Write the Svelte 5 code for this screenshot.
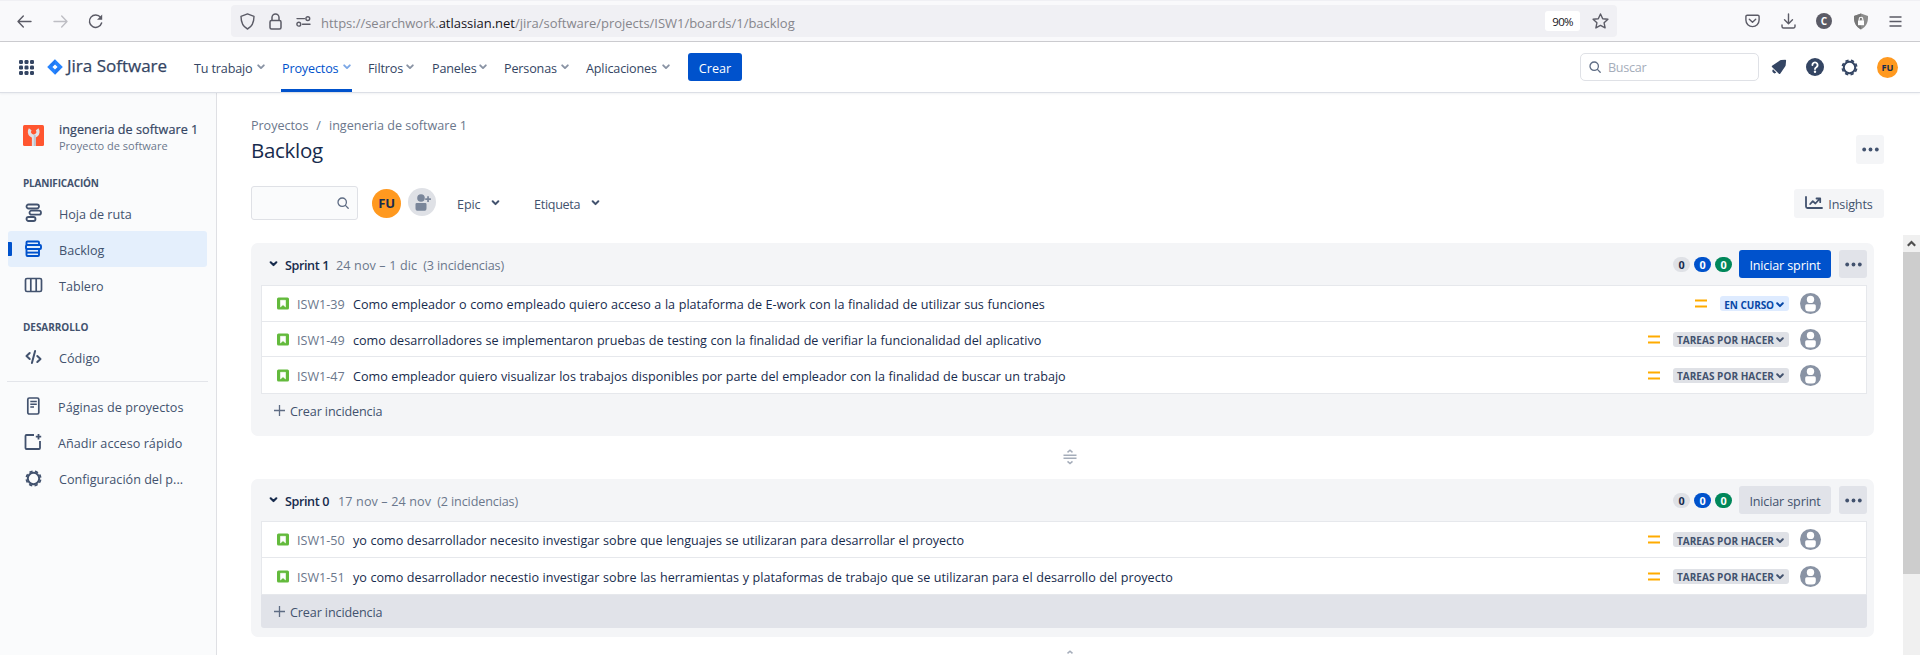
<script>
  const menus = [
    { label: 'Tu trabajo', w: 63, gap: 17 },
    { label: 'Proyectos', w: 61, gap: 16, active: true },
    { label: 'Filtros', w: 38, gap: 18 },
    { label: 'Paneles', w: 47, gap: 17 },
    { label: 'Personas', w: 57, gap: 17 },
    { label: 'Aplicaciones', w: 76, gap: 18 }
  ];
  const todo = 'Tareas por hacer';
  const sprints = [
    {
      name: 'Sprint 1', nameWidth: 51, dates: '24 nov – 1 dic', count: '(3 incidencias)', primary: true,
      issues: [
        { key: 'ISW1-39', text: 'Como empleador o como empleado quiero acceso a la plataforma de E-work con la finalidad de utilizar sus funciones', status: 'En curso', h: 35 },
        { key: 'ISW1-49', text: 'como desarrolladores se implementaron pruebas de testing con la finalidad de verifiar la funcionalidad del aplicativo', status: todo, h: 34 },
        { key: 'ISW1-47', text: 'Como empleador quiero visualizar los trabajos disponibles por parte del empleador con la finalidad de buscar un trabajo', status: todo, h: 36 }
      ]
    },
    {
      name: 'Sprint 0', nameWidth: 53, dates: '17 nov – 24 nov', count: '(2 incidencias)', primary: false,
      issues: [
        { key: 'ISW1-50', text: 'yo como desarrollador necesito investigar sobre que lenguajes se utilizaran para desarrollar el proyecto', status: todo, h: 35 },
        { key: 'ISW1-51', text: 'yo como desarrollador necestio investigar sobre las herramientas y plataformas de trabajo que se utilizaran para el desarrollo del proyecto', status: todo, h: 36 }
      ]
    }
  ];
</script>

{#snippet chevron(w, sw)}
  <svg class="chev" width={w} height="6" viewBox="0 0 8 6" fill="none" stroke="currentColor" stroke-width={sw} stroke-linecap="round" stroke-linejoin="round"><path d="M1.2 1.3 4 4.1 6.8 1.3" /></svg>
{/snippet}

{#snippet gear(s)}
  <svg width={s} height={s} viewBox="0 0 17 17" fill="none" stroke="currentColor"><circle cx="8.5" cy="8.5" r="5.7" stroke-width="2" /><circle cx="8.5" cy="8.5" r="7.2" stroke-width="1.7" stroke-dasharray="3.3 2.355" stroke-dashoffset="-1.2" /></svg>
{/snippet}

{#snippet magnifier(s)}
  <svg width={s} height={s} viewBox="0 0 12 12" fill="none" stroke="currentColor" stroke-width="1.3" stroke-linecap="round"><circle cx="5.2" cy="5.2" r="4.2" /><path d="m8.4 8.4 2.8 2.8" /></svg>
{/snippet}

{#snippet dots()}
  <svg width="17" height="5" viewBox="0 0 17 5" fill="currentColor"><circle cx="2.2" cy="2.5" r="1.9" /><circle cx="8.5" cy="2.5" r="1.9" /><circle cx="14.8" cy="2.5" r="1.9" /></svg>
{/snippet}

{#snippet resizer()}
  <svg class="resizer" width="14" height="16" viewBox="0 0 14 16" fill="none" stroke="#a5adba"><path d="M.5 6.3h13M.5 9.3h13" stroke-width="1.4" /><path d="M4.5 3.4 7 1.2l2.5 2.2M4.5 12.4 7 14.6l2.5-2.2" stroke-width="1.5" /></svg>
{/snippet}

<div class="page">
  <div class="browser">
    <svg class="back" width="15" height="13" viewBox="0 0 15 13" fill="none" stroke="#5b5b66" stroke-width="1.4" stroke-linecap="round" stroke-linejoin="round"><path d="M14 6.5H1M6.3 1 1 6.5 6.3 12" /></svg>
    <svg class="fwd" width="15" height="13" viewBox="0 0 15 13" fill="none" stroke="#bebec4" stroke-width="1.4" stroke-linecap="round" stroke-linejoin="round"><path d="M1 6.5h13M8.7 1 14 6.5 8.7 12" /></svg>
    <svg class="reload" width="16" height="15" viewBox="0 0 16 15" fill="none" stroke="#5b5b66" stroke-width="1.5"><path d="M12.6 3.4A6.2 6.2 0 1 0 13.6 9" stroke-linecap="round" /><path d="M14.2.6v5.2H9z" fill="#5b5b66" stroke="none" /></svg>
    <div class="urlbar">
      <svg width="15" height="17" viewBox="0 0 15 17" fill="none" stroke="#5b5b66" stroke-width="1.4" stroke-linejoin="round"><path d="M7.5.9 14 3.3c0 5.7-1.5 10.2-6.5 12.7C2.5 13.5 1 9 1 3.3Z" /></svg>
      <svg class="lock" width="13" height="17" viewBox="0 0 13 17" fill="none" stroke="#5b5b66" stroke-width="1.5"><rect x="1" y="7.5" width="11" height="8.5" rx="1.5" /><path d="M3 7.5V4.5a3.5 3.5 0 0 1 7 0v3" /></svg>
      <svg class="perm" width="15" height="11" viewBox="0 0 15 11" fill="none" stroke="#5b5b66" stroke-width="1.4" stroke-linecap="round"><path d="M1 2.6h7.5M6.5 8.2H14" /><circle cx="11.8" cy="2.6" r="1.9" /><circle cx="2.8" cy="8.2" r="1.9" /></svg>
      <span class="url">https://searchwork.<b>atlassian.net</b>/jira/software/projects/ISW1/boards/1/backlog</span>
      <span class="zoom">90%</span>
      <svg class="star" width="17" height="16" viewBox="0 0 17 16" fill="none" stroke="#5b5b66" stroke-width="1.4" stroke-linejoin="round"><path d="m8.5 1 2.2 4.7 5.2.6-3.8 3.5 1 5.1-4.6-2.5-4.6 2.5 1-5.1L1.1 6.3l5.2-.6Z" /></svg>
    </div>
    <div class="ext">
      <svg width="15" height="14" viewBox="0 0 15 14" fill="none" stroke="#5b5b66" stroke-width="1.4" stroke-linecap="round" stroke-linejoin="round"><path d="M2.2 1.2h10.6a1.3 1.3 0 0 1 1.3 1.3V6a6.6 6.6 0 0 1-13.2 0V2.5a1.3 1.3 0 0 1 1.3-1.3Z" /><path d="m4.300 5.300 3.200 3 3.200-3" /></svg>
      <svg width="15" height="16" viewBox="0 0 15 16" fill="none" stroke="#5b5b66" stroke-width="1.4" stroke-linecap="round" stroke-linejoin="round"><path d="M7.5 1v9.5M3.500 6.700l4 4 4-4M1 12v1.500A1.500 1.500 0 0 0 2.500 15h10a1.500 1.500 0 0 0 1.500-1.500V12" /></svg>
      <span class="cbadge">C</span>
      <svg width="16" height="17" viewBox="0 0 16 17"><path d="M8 .5 15 3c.2 6-1.500 10.700-7 13.500C2.500 13.700.8 9 1 3Z" fill="#8c8c8c" /><path d="M8 .5 1 3C.8 9 2.500 13.700 8 16.500Z" fill="#777" /><rect x="5" y="7.400" width="6" height="4.800" fill="#fff" /><path d="M6.200 7.500V6a1.800 1.800 0 0 1 3.600 0v1.500" fill="none" stroke="#fff" stroke-width="1.100" /></svg>
      <svg width="13" height="11" viewBox="0 0 13 11" stroke="#5b5b66" stroke-width="1.300"><path d="M.5 1h12M.5 5.500h12M.5 10h12" /></svg>
    </div>
  </div>

  <header class="nav">
    <svg class="grid" width="15" height="15" viewBox="0 0 15 15" fill="#344563">{#each [0, 5.5, 11] as y}{#each [0, 5.5, 11] as x}<rect {x} {y} width="4" height="4" rx="1.2" />{/each}{/each}</svg>
    <svg class="mark" width="16" height="16" viewBox="0 0 16 16"><path d="M8 .2 15.800 8 8 15.800.2 8Z" fill="#2684ff" /><path d="M8 .2v5.300L5.500 8 2.800 5.400ZM8 15.800v-5.300L10.500 8l2.700 2.600Z" fill="#1868e0" opacity=".4" /><path d="M8 5.400 10.600 8 8 10.600 5.400 8Z" fill="#fff" /></svg>
    <span class="brand">Jira Software</span>
    {#each menus as m}
      <div class="menu" class:active={m.active} style:margin-right="{m.gap}px">
        <span style:width="{m.w}px">{m.label}</span>
        {@render chevron(8, 1.9)}
      </div>
    {/each}
    <button class="create">Crear</button>
    <div class="search">{@render magnifier(12)}<span>Buscar</span></div>
    <svg class="bell" width="16" height="16" viewBox="0 0 16 16" fill="#344563"><path d="M10.200 1.100 14.300.8q.8 0 .8.8L14.700 6q0 1.200-.9 2l-4.600 6.700q-.6.700-1.300 0L1 7.900Q.4 7.300 1.100 6.800L8.200 2q.9-.8 2-.9Z" /><path d="M2 10.300a2.300 2.300 0 0 0 3.300 3.300Z" /></svg>
    <svg class="help" width="18" height="18" viewBox="0 0 18 18"><circle cx="9" cy="9" r="9" fill="#344563" /><path d="M6.400 7a2.600 2.600 0 1 1 4 2.200C9.500 9.800 9 10.200 9 11" fill="none" stroke="#fff" stroke-width="1.900" stroke-linecap="round" /><circle cx="9" cy="13.700" r="1.200" fill="#fff" /></svg>
    <span class="cog">{@render gear(17)}</span>
    <span class="me">FU</span>
  </header>

  <div class="body">
    <aside>
      <div class="project">
        <svg width="21" height="21" viewBox="0 0 21 21"><rect width="21" height="21" rx="1.500" fill="#ff5630" /><path d="M7.200 4.300a4.300 4.300 0 1 0 7 0" fill="none" stroke="#dfe1e6" stroke-width="3.200" /><rect x="8.900" y="10" width="3.800" height="11" fill="#dfe1e6" /><path d="M10.800 10h1.900v11h-1.900Z" fill="#bcc6d0" /></svg>
        <div><div class="pname">ingeneria de software 1</div><div class="psub">Proyecto de software</div></div>
      </div>
      <h2>PLANIFICACIÓN</h2>
      <div class="item">
        <svg width="18" height="20" viewBox="0 0 18 20" fill="none" stroke="#42526e" stroke-width="1.800"><rect x="2" y="1.500" width="12.500" height="4" rx="2" /><rect x="5" y="7.700" width="11.500" height="4" rx="2" /><rect x="2" y="14" width="9" height="4" rx="2" /></svg>
        <span>Hoja de ruta</span>
      </div>
      <div class="item selected">
        <svg width="18" height="18" viewBox="0 0 18 18" fill="none" stroke="#0052cc" stroke-width="1.900"><rect x="2" y="1.500" width="12.500" height="3.500" rx="1" /><rect x="1.500" y="5" width="15" height="4" rx="1" /><rect x="2" y="9" width="12.500" height="7" rx="1" /><path d="M2 12.600h12.500" /></svg>
        <span>Backlog</span>
      </div>
      <div class="item">
        <svg width="18" height="16" viewBox="0 0 18 16" fill="none" stroke="#42526e" stroke-width="1.700"><rect x="1" y="1.500" width="16" height="13" rx="1.500" /><path d="M6.300 1.500v13M11.700 1.500v13" /></svg>
        <span>Tablero</span>
      </div>
      <h2 class="dev">DESARROLLO</h2>
      <div class="item">
        <svg width="18" height="16" viewBox="0 0 18 16" fill="none" stroke="#42526e" stroke-width="2" stroke-linecap="round" stroke-linejoin="round"><path d="M5.200 4 2 7l3.200 3M12.800 7 16 10l-3.200 3M10.600 2 7.400 14" /></svg>
        <span>Código</span>
      </div>
      <hr />
      <div class="item more">
        <svg width="16" height="18" viewBox="0 0 16 18" fill="none" stroke="#42526e" stroke-width="1.700"><rect x="2.300" y="1" width="11" height="16" rx="1.500" /><path d="M4.800 4.500h6.500M4.800 7.200h6.500M4.800 9.900h3.700" stroke-width="1.500" /></svg>
        <span>Páginas de proyectos</span>
      </div>
      <div class="item more">
        <svg width="18" height="18" viewBox="0 0 18 18" fill="none" stroke="#42526e" stroke-width="1.800"><path d="M9.500 2H2a1 1 0 0 0-1 1v12a1 1 0 0 0 1 1h12.500a1 1 0 0 0 1-1V8" /><path d="M14 1v5.400M11.300 3.700h5.400" /></svg>
        <span>Añadir acceso rápido</span>
      </div>
      <div class="item conf"><i>{@render gear(17)}</i><span>Configuración del p...</span></div>
    </aside>

    <main>
      <div class="top">
        <div class="crumbs"><span>Proyectos</span><span>/</span><span>ingeneria de software 1</span></div>
        <div class="titlerow"><h1>Backlog</h1><button class="square light">{@render dots()}</button></div>
        <div class="filters">
          <div class="find">{@render magnifier(12)}</div>
          <span class="avatar">FU</span>
          <svg class="add" width="28" height="28" viewBox="0 0 28 28"><circle cx="14" cy="14" r="14" fill="#dfe1e6" /><g fill="#7a869a"><circle cx="13" cy="10" r="3.800" /><path d="M7.500 16.200q0-1.200 1.200-1.200h8.600q1.200 0 1.200 1.200v4q0 2.600-2.600 2.600h-5.800q-2.600 0-2.600-2.600Z" /><path d="M19.200 8.200h1.700v2h2v1.700h-2v2h-1.700v-2h-2v-1.700h2Z" /></g></svg>
          <div class="drop epic"><span>Epic</span>{@render chevron(9, 2)}</div>
          <div class="drop tag"><span>Etiqueta</span>{@render chevron(9, 2)}</div>
          <button class="insights">
            <svg width="18" height="14" viewBox="0 0 18 14" fill="none" stroke="#42526e" stroke-width="1.800" stroke-linecap="round" stroke-linejoin="round"><path d="M1 1v9.500A1.500 1.500 0 0 0 2.500 12H17" /><path d="m5.200 8 2.600-2.800 2.600 2.300L14.500 3M11.500 2.500h3.700v3.700" /></svg>
            <span>Insights</span>
          </button>
        </div>
      </div>

      <div class="scroll">
        <div class="list">
          {#each sprints as s}
            <section>
              <div class="shead">
                {@render chevron(9, 2.1)}
                <b style:width="{s.nameWidth}px">{s.name}</b><span class="dates">{s.dates}</span><span>{s.count}</span>
                <div class="counts"><i>0</i><i class="blue">0</i><i class="green">0</i></div>
                <button class="start" class:primary={s.primary}>Iniciar sprint</button>
                <button class="square">{@render dots()}</button>
              </div>
              <div class="rows">
                {#each s.issues as it}
                  <div class="row" style:height="{it.h}px">
                    <svg width="12" height="13" viewBox="0 0 12 13"><rect y=".5" width="12" height="12" rx="1.500" fill="#63ba3c" /><path d="M3.500 3.300h5v6.600L6 7.700 3.500 9.900Z" fill="#fff" stroke="#fff" stroke-width=".6" stroke-linejoin="round" /></svg>
                    <span class="key">{it.key}</span>
                    <span class="text">{it.text}</span>
                    <svg width="12" height="9" viewBox="0 0 12 9" stroke="#ffab00" stroke-width="2"><path d="M0 1.500h12M0 7.500h12" /></svg>
                    <span class="status" class:doing={it.status === 'En curso'}><em>{it.status}</em>{@render chevron(8, 2)}</span>
                    <svg width="21" height="21" viewBox="0 0 21 21"><circle cx="10.500" cy="10.500" r="10.500" fill="#8993a4" /><circle cx="10.500" cy="6.400" r="3.700" fill="#fff" /><path d="M5.200 12.700q0-1.500 1.500-1.500h7.600q1.500 0 1.500 1.500V15q0 3.600-3.600 3.600H8.800q-3.600 0-3.600-3.600Z" fill="#fff" /></svg>
                  </div>
                {/each}
              </div>
              <div class="new" class:hover={!s.primary}>
                <svg width="11" height="11" viewBox="0 0 11 11" stroke="#5e6c84" stroke-width="1.300"><path d="M5.500 0v11M0 5.500h11" /></svg>
                <span>Crear incidencia</span>
              </div>
            </section>
            <div class="divider">{@render resizer()}</div>
          {/each}
        </div>
        <div class="bar">
          <div class="arrow"><svg width="9" height="7" viewBox="0 0 9 7" fill="none" stroke="#505050" stroke-width="2.200"><path d="M.8 5.700 4.500 2l3.700 3.700" /></svg></div>
          <div class="thumb"></div>
        </div>
      </div>
    </main>
  </div>
</div>

<style>
  :global(body) { margin: 0; overflow: hidden; }
  .page { width: 1920px; height: 655px; overflow: hidden; display: flex; flex-direction: column; background: #fff; font-family: "Open Sans", "Noto Sans", sans-serif; font-size: 12.6px; line-height: 18px; color: #42526e; white-space: nowrap; }
  .page :global(*) { box-sizing: border-box; }
  svg { display: block; flex: none; }
  button { border: 0; padding: 0; margin: 0; font: inherit; color: #42526e; display: flex; align-items: center; justify-content: center; flex: none; }

  .browser { height: 42px; flex: none; display: flex; align-items: center; background: #f9f9fb; border-top: 1px solid #f0f0f4; border-bottom: 1px solid #ccccd0; }
  .back { margin-left: 17px; }
  .fwd { margin-left: 21px; }
  .reload { margin-left: 20px; }
  .urlbar { margin-left: 127px; width: 1386px; height: 32px; border-radius: 4px; background: #f0f0f4; display: flex; align-items: center; padding-left: 9px; }
  .lock { margin-left: 14px; }
  .perm { margin-left: 14px; }
  .url { margin-left: 10px; padding-top: 3px; font-size: 13px; letter-spacing: -.02px; color: #86868c; }
  .url b { font-weight: 400; color: #15141a; }
  .zoom { margin-left: auto; width: 35px; height: 20px; border-radius: 3px; background: #fff; color: #15141a; font-size: 11.5px; letter-spacing: -.8px; line-height: 22px; text-align: center; }
  .star { margin: 0 8px 0 12px; }
  .ext { flex: 1; display: flex; align-items: center; justify-content: space-between; padding: 0 18px 0 128px; }
  .cbadge { width: 16px; height: 16px; border-radius: 50%; background: #5b5b66; color: #fff; font-size: 10px; font-weight: 700; line-height: 16px; text-align: center; }

  .nav { height: 51px; flex: none; display: flex; align-items: center; border-bottom: 1px solid #dcdfe6; box-shadow: 0 1px 2px rgba(9, 30, 66, .06); position: relative; color: #344563; }
  .grid { margin-left: 19px; }
  .mark { margin-left: 13px; }
  .brand { margin: 0 27px 2px 4px; width: 100px; font-size: 17px; letter-spacing: 0; -webkit-text-stroke: .25px currentColor; }
  .menu { height: 50px; display: flex; align-items: center; flex: none; letter-spacing: -.15px; }
  .menu span { padding-top: 4px; }
  .menu .chev { color: #8993a4; }
  .menu.active { color: #0052cc; border-bottom: 3px solid #0052cc; padding: 3px 1px 0; margin-left: -1px; }
  .menu.active .chev { color: #7ba7e6; }
  .create { width: 54px; height: 28px; border-radius: 3px; background: #0052cc; color: #fff; padding-top: 4px; }
  .search { margin-left: auto; width: 179px; height: 28px; border: 1px solid #dfe1e6; border-radius: 5px; display: flex; align-items: center; padding-left: 8px; color: #5e6c84; }
  .search span { margin-left: 7px; padding-top: 2px; color: #a5adba; letter-spacing: -.3px; }
  .bell { margin-left: 12px; }
  .help { margin-left: 19px; }
  .cog { margin-left: 17px; }
  .me { margin: 0 22px 0 19px; width: 21px; height: 21px; border-radius: 50%; background: #ff991f; color: #172b4d; font-size: 9.2px; font-weight: 700; line-height: 21px; text-align: center; }

  .body { flex: 1; min-height: 0; display: flex; }
  aside { width: 217px; flex: none; background: #fafbfc; border-right: 1px solid #dfe0e4; display: flex; flex-direction: column; padding: 27px 9px 0 8px; }
  .project { display: flex; padding-left: 15px; height: 49px; }
  .project svg { margin-top: 5px; }
  .project > div { margin-left: 15px; padding-top: 1px; }
  .pname { height: 16px; letter-spacing: .06px; color: #344563; -webkit-text-stroke: .2px currentColor; }
  .psub { font-size: 11px; line-height: 17px; color: #6b778c; }
  h2 { margin: 0; height: 26px; padding-left: 15px; font-size: 10px; line-height: 28px; font-weight: 700; letter-spacing: -.18px; }
  .item { height: 36px; flex: none; display: flex; align-items: center; padding-left: 16px; border-radius: 3px; }
  .item svg, .item i { width: 19px; }
  .item span { margin-left: 16px; padding-top: 3px; }
  .item.selected { background: #e4effc; position: relative; }
  .item.selected::before { content: ""; position: absolute; left: 0; top: 11px; width: 4px; height: 14px; background: #0052cc; border-radius: 0 1px 1px 0; }
  .dev { margin-top: 10px; letter-spacing: -.05px; }
  hr { width: 201px; height: 1px; border: 0; margin: 6px 0 6px -1px; background: #e3e5ea; flex: none; }
  .item.more span { margin-left: 15px; letter-spacing: .05px; }
  .conf { height: 37px; }

  main { flex: 1; min-width: 0; display: flex; flex-direction: column; }
  .top { height: 142px; flex: none; padding: 24px 36px 0 34px; }
  .crumbs { height: 18px; display: flex; color: #6b778c; }
  .crumbs span { margin-right: 8px; }
  .crumbs span:first-child { letter-spacing: -.05px; }
  .titlerow { height: 29px; display: flex; justify-content: space-between; align-items: flex-start; }
  h1 { margin: 0; font-size: 20.5px; line-height: 30px; font-weight: 400; letter-spacing: -.3px; color: #172b4d; }
  .square { width: 28px; height: 28px; border-radius: 3px; background: #e1e3e9; }
  .light { background: #f4f5f7; height: 29px; }
  .filters { margin-top: 20px; display: flex; align-items: center; height: 38px; }
  .find { width: 107px; height: 34px; border: 1px solid #dfe1e6; border-radius: 3px; background: #fafbfc; display: flex; align-items: center; justify-content: flex-end; padding-right: 8px; color: #5e6c84; }
  .avatar { margin-left: 14px; width: 29px; height: 29px; border-radius: 50%; background: #ff991f; color: #172b4d; font-size: 13px; font-weight: 700; line-height: 29px; text-align: center; letter-spacing: -.3px; }
  .add { margin: 0 0 2px 7px; }
  .drop { display: flex; align-items: center; justify-content: space-between; }
  .drop span { padding-top: 4px; letter-spacing: -.1px; }
  .epic { margin-left: 21px; width: 43px; }
  .tag { margin-left: 34px; width: 66px; }
  .drop.tag span { letter-spacing: -.3px; }
  .insights { margin-left: auto; width: 90px; height: 29px; border-radius: 3px; background: #f4f5f7; }
  .insights span { margin-left: 5px; padding-top: 4px; letter-spacing: -.15px; }

  .scroll { flex: 1; min-height: 0; display: flex; }
  .list { flex: 1; min-width: 0; overflow: hidden; padding: 8px 29px 0 34px; }
  section { background: #f4f5f7; border-radius: 7px; padding: 0 7px 9px 10px; }
  .shead { height: 42px; display: flex; align-items: center; color: #6b778c; padding-left: 8px; }
  .shead > .chev { margin-bottom: 1px; color: #172b4d; }
  .shead b { margin-left: 7px; padding-top: 3px; font-weight: 600; letter-spacing: -.4px; color: #172b4d; }
  .shead > span { padding-top: 3px; letter-spacing: -.12px; }
  .shead .dates { margin-right: 6px; letter-spacing: .12px; }
  .counts { margin-left: auto; display: flex; gap: 4px; padding-top: 1px; }
  .counts i { width: 17px; height: 15px; border-radius: 8px; background: #dfe1e6; color: #172b4d; font-style: normal; font-size: 10.8px; font-weight: 700; line-height: 16px; text-align: center; }
  .counts .blue { background: #0052cc; color: #fff; }
  .counts .green { background: #00875a; color: #fff; }
  .start { margin: 0 8px 0 7px; width: 92px; height: 28px; border-radius: 3px; background: #e1e3e9; letter-spacing: -.15px; padding-top: 4px; }
  .start.primary { background: #0052cc; color: #fff; }
  .rows { border: 1px solid #e6e8ec; border-bottom: 0; }
  .row { background: #fff; box-sizing: content-box !important; border-bottom: 1px solid #e6e8ec; display: flex; align-items: center; padding: 0 45px 0 15px; }
  .key { margin-left: 8px; width: 56px; color: #6b778c; padding-top: 3px; }
  .text { flex: 1; color: #172b4d; padding-top: 3px; word-spacing: .3px; }
  .status { margin: 0 11px 0 13px; height: 15px; border-radius: 3px; background: #dfe1e6; color: #42526e; display: flex; align-items: center; padding: 0 5px 0 4px; gap: 2px; }
  .status em { font-style: normal; font-size: 10px; font-weight: 700; line-height: 16px; text-transform: uppercase; letter-spacing: .04px; padding-top: 2px; }
  .status .chev { margin-top: 2px; }
  .status.doing { background: #deebff; color: #0747a6; }
  .status.doing em { letter-spacing: -.08px; }
  .new { height: 33px; display: flex; align-items: center; padding-left: 13px; border-radius: 0 0 3px 3px; }
  .new span { margin-left: 5px; padding-top: 3px; letter-spacing: -.12px; }
  .new.hover { background: #e1e3e9; }
  .divider { height: 43px; padding: 6px 0 0 812px; }
  .resizer { margin-top: 7px; }
  .bar { width: 17px; background: #f0f0f0; }
  .arrow { height: 17px; display: flex; align-items: center; justify-content: center; }
  .thumb { height: 322px; background: #cdcdcd; }
</style>
